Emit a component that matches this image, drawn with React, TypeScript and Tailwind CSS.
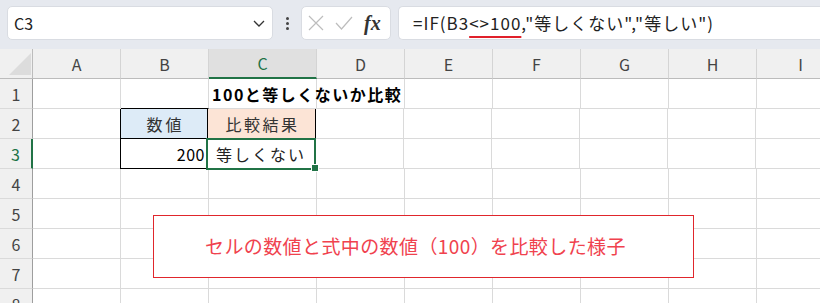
import React from "react";

const FONT = { fontFamily: '"Noto Sans CJK JP", "Noto Sans", sans-serif' };

const cols = [
  { k: "A", w: "w-[88px]" },
  { k: "B", w: "w-[88px]" },
  { k: "C", w: "w-[108px]" },
  { k: "D", w: "w-[88px]" },
  { k: "E", w: "w-[88px]" },
  { k: "F", w: "w-[88px]" },
  { k: "G", w: "w-[88px]" },
  { k: "H", w: "w-[88px]" },
  { k: "I", w: "w-[88px]" },
];

function Cell({ w, children, className = "" }: { w: string; children?: React.ReactNode; className?: string }) {
  return (
    <div className={`${w} h-[30px] shrink-0 border-r border-b border-[#dadada] flex items-center text-[16px] text-black ${className}`}>
      {children}
    </div>
  );
}

export default function App() {
  const rows = [1, 2, 3, 4, 5, 6, 7, 8];
  return (
    <div className="w-[820px] h-[303px] overflow-hidden bg-white relative" style={FONT}>
      {/* toolbar */}
      <div className="h-[49px] bg-[#e6e9ef] flex items-start pt-[6px] pl-[7px] gap-0">
        <div className="w-[266px] h-[34px] bg-white rounded-[5px] border border-[#d9dce2] flex items-center pl-[6px] pr-[4px]">
          <span className="text-[16px] text-[#222] flex-1">C3</span>
          <svg width="14" height="14" viewBox="0 0 14 14" className="mr-[2px]">
            <path d="M2 5 L7 10 L12 5" fill="none" stroke="#333" strokeWidth="1.3" />
          </svg>
        </div>
        <div className="w-[28px] h-[34px] flex flex-col items-center justify-center gap-[2px]">
          <div className="w-[3px] h-[3px] bg-[#444] rounded-full" />
          <div className="w-[3px] h-[3px] bg-[#444] rounded-full" />
          <div className="w-[3px] h-[3px] bg-[#444] rounded-full" />
        </div>
        <div className="w-[90px] h-[34px] bg-white rounded-[5px] border border-[#d9dce2] flex items-center pl-[6px] gap-[11px]">
          <svg width="16" height="16" viewBox="0 0 16 16">
            <path d="M1 1 L15 15 M15 1 L1 15" stroke="#bdbdbd" strokeWidth="1.2" />
          </svg>
          <svg width="18" height="16" viewBox="0 0 18 16">
            <path d="M1 8 L6.5 14 L17 2" fill="none" stroke="#bdbdbd" strokeWidth="1.2" />
          </svg>
          <span className="text-[20px] italic font-bold text-[#333] leading-none" style={{ fontFamily: '"Liberation Serif", serif' }}>
            fx
          </span>
        </div>
        <div className="ml-[7px] flex-1 h-[34px] bg-white rounded-l-[5px] border border-r-0 border-[#d9dce2] flex items-center pl-[14px]">
          <span className="text-[17px] tracking-[1px] text-[#222] whitespace-nowrap">
            =IF(B3
            <span className="underline decoration-2 decoration-[#e0202a] underline-offset-[6px]">&lt;&gt;100</span>
            ,"等しくない","等しい")
          </span>
        </div>
      </div>

      {/* header row */}
      <div className="flex h-[30px]">
        <div className="w-[33px] h-[30px] shrink-0 bg-[#f0f0f0] border-r border-b border-[#bcbcbc] relative">
          <svg width="28" height="24" viewBox="0 0 28 24" className="absolute left-[4px] top-[3px]">
            <path d="M27 1 L27 23 L5 23 Z" fill="#dcdcdc" />
          </svg>
        </div>
        {cols.map((c) => (
          <div
            key={c.k}
            className={`${c.w} h-[30px] shrink-0 flex items-center justify-center text-[16px] border-r border-[#d4d4d4] ${
              c.k === "C"
                ? "bg-[#e0e0e0] text-[#217346] border-b-2 border-b-[#217346]"
                : "bg-[#f0f0f0] text-[#444] border-b border-b-[#bcbcbc]"
            }`}
          >
            {c.k}
          </div>
        ))}
      </div>

      {rows.map((r) => (
        <div key={r} className="flex h-[30px]">
          <div
            className={`w-[33px] h-[30px] shrink-0 bg-[#f0f0f0] border-b border-b-[#dadada] flex items-center justify-center text-[16px] ${
              r === 3 ? "text-[#217346] border-r-2 border-r-[#217346]" : "text-[#444] border-r border-r-[#9e9e9e]"
            }`}
          >
            {r}
          </div>
          {cols.map((c) => {
            if (r === 1 && c.k === "C")
              return (
                <Cell key={c.k} w={c.w} className="overflow-visible relative">
                  <span className="absolute left-[3px] font-bold tracking-[1.5px] whitespace-nowrap z-10">100と等しくないか比較</span>
                </Cell>
              );
            if (r === 2 && c.k === "B")
              return (
                <Cell key={c.k} w={c.w} className="bg-[#ddebf7] justify-center !border-[#000] -ml-px border-l">
                  <span className="text-[#333] tracking-[3px] ml-[3px]">数値</span>
                </Cell>
              );
            if (r === 2 && c.k === "C")
              return (
                <Cell key={c.k} w={c.w} className="bg-[#fce4d6] justify-center !border-[#000]">
                  <span className="text-[#333] tracking-[2.5px] ml-[2px]">比較結果</span>
                </Cell>
              );
            if (r === 3 && c.k === "B")
              return (
                <Cell key={c.k} w={c.w} className="justify-end pr-[2px] !border-[#000] -ml-px border-l tracking-[0.5px]">
                  200
                </Cell>
              );
            if (r === 3 && c.k === "C")
              return (
                <Cell key={c.k} w={c.w} className="relative !border-[#000]">
                  <div className="absolute -left-[2px] -top-[1px] w-[110px] h-[32px] border-2 border-[#217346] flex items-center pl-[8px] tracking-[2px] text-[#222] bg-white z-10">
                    等しくない
                  </div>
                  <div className="absolute -right-[4px] -bottom-[4px] w-[6px] h-[6px] bg-[#217346] border border-white z-20 box-content" />
                </Cell>
              );
            if (r === 1 && c.k === "B") return <Cell key={c.k} w={c.w} className="!border-b-[#000]" />;
            return <Cell key={c.k} w={c.w} />;
          })}
        </div>
      ))}

      {/* text box overlay */}
      <div className="absolute left-[153px] top-[215px] w-[541px] h-[63px] bg-white border border-[#e0262c] flex items-center pl-[51px]">
        <span className="text-[19px] tracking-[0.4px] text-[#f0424e] whitespace-nowrap">セルの数値と式中の数値（100）を比較した様子</span>
      </div>
    </div>
  );
}
